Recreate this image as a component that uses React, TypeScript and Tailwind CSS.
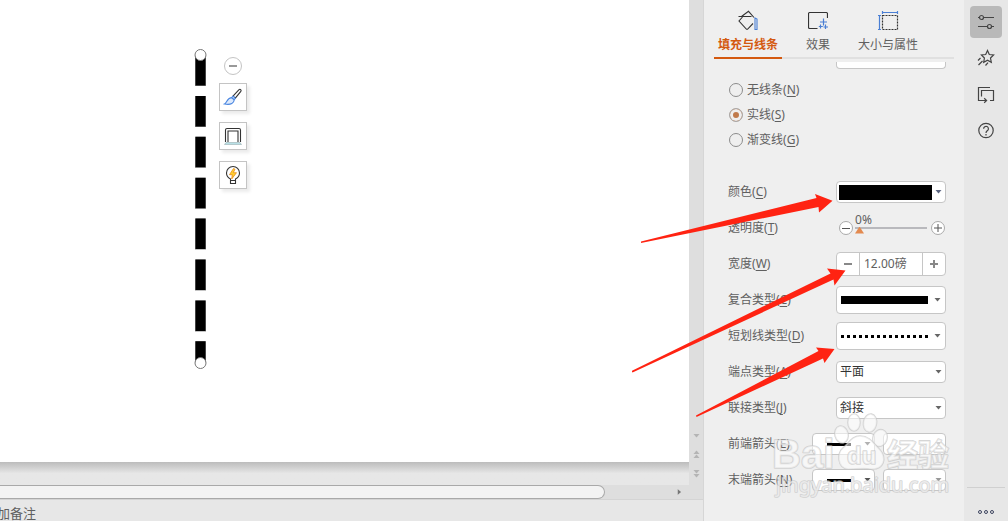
import { useState, type ReactNode } from "react";
import clsx from "clsx";

const lineKinds = [
  { id: "none", name: "无线条", hotkey: "N" },
  { id: "solid", name: "实线", hotkey: "S" },
  { id: "gradient", name: "渐变线", hotkey: "G" },
];

const boxStyle = "border border-[#c6c6c6] rounded bg-white";

function Label({ name, hotkey }: { name: string; hotkey: string }) {
  return (
    <>
      {name}(<span className="underline underline-offset-2">{hotkey}</span>)
    </>
  );
}

function Caret({ className }: { className?: string }) {
  return (
    <svg viewBox="0 0 7 4" className={clsx("w-[7px] h-1 shrink-0", className)} aria-hidden="true">
      <path d="M0.5 0h6L3.5 3.6z" fill="currentColor" />
    </svg>
  );
}

function Row({ id, name, hotkey, children }: { id: string; name: string; hotkey: string; children: ReactNode }) {
  return (
    <div className="flex items-center justify-between h-9">
      <label htmlFor={id} className="whitespace-nowrap">
        <Label name={name} hotkey={hotkey} />
      </label>
      {children}
    </div>
  );
}

function TextSelect({ id, options }: { id: string; options: string[] }) {
  return (
    <div className="relative w-[110px]">
      <select id={id} className={clsx(boxStyle, "appearance-none w-full h-[22px] pl-[3px] text-[#333] leading-5 outline-none")}>
        {options.map((o) => (
          <option key={o}>{o}</option>
        ))}
      </select>
      <Caret className="absolute right-1 top-[9px] text-[#666] pointer-events-none" />
    </div>
  );
}

/* Tab icons */
function FillIcon() {
  return (
    <svg viewBox="0 0 20 20" className="w-5 h-5" fill="none" stroke="#333" strokeWidth="1.1">
      <path d="M0.5 6.5h13M3.5 6.5L10.5 1.3 16 7.5M4.5 7L1 11l7.5 8.3h1L15 13.5" />
      <path d="M17 8l2 1v10.5h-2z" stroke="#4a7fd4" />
    </svg>
  );
}

function EffectIcon() {
  return (
    <svg viewBox="0 0 20 20" className="w-5 h-5" fill="none" stroke="#333" strokeWidth="1.2">
      <path d="M9.5 18.5h-8a1.5 1.5 0 0 1-1-1v-14a1.5 1.5 0 0 1 1-1h17a1.5 1.5 0 0 1 1 1V8" />
      <path d="M15.5 8.5v7M12 12h7M12.5 14.5v4M10.8 16.5h4M17.5 14.5v4.5M15.5 17h4.5" stroke="#4a7fd4" />
    </svg>
  );
}

function SizeIcon() {
  return (
    <svg viewBox="0 0 22 20" className="w-[22px] h-5" fill="none" stroke="#333" strokeWidth="1.2">
      <path d="M5.5 5.5h15v14h-15z" strokeDasharray="2 1" />
      <path d="M5 2.5h16M5.5 1v3M20.5 1v3M2.5 5v15M1 5.5h3M1 19.5h3" stroke="#4a7fd4" />
    </svg>
  );
}

const tabs = [
  { name: "填充与线条", icon: <FillIcon />, active: true },
  { name: "效果", icon: <EffectIcon />, active: false },
  { name: "大小与属性", icon: <SizeIcon />, active: false },
];

const railItems = [
  {
    name: "属性",
    active: true,
    icon: <path d="M6.5 5.5H17M1 14.5h9.5M14.5 14.5H17M1 5.5h1.5M6.5 5.5a2 2 0 1 1-4 0 2 2 0 0 1 4 0zM14.5 14.5a2 2 0 1 1-4 0 2 2 0 0 1 4 0z" />,
  },
  {
    name: "动画",
    active: false,
    icon: (
      <path d="M10.5 2.5l1.8 4 4.3.5-3.1 3 .8 4.3-3.8-2.1-3.8 2.1.7-4.3-3-3 4.3-.5zM1 12.5l2.5-2.5M1.5 17l4-4M8.5 17.5l2.5-2.8" />
    ),
  },
  {
    name: "切换",
    active: false,
    icon: <path d="M13 3.5H1.5v13h8M7.2 14.2l2.4 2.3-2.4 2.3M4.5 12.5v-6h12v10H13" />,
  },
  {
    name: "帮助",
    active: false,
    icon: (
      <>
        <circle cx="9" cy="10.5" r="7.2" />
        <path d="M6.6 8.7a2.4 2.4 0 1 1 3.9 1.9C9.4 11.4 9 11.8 9 12.9M9 14.1v1.3" />
      </>
    ),
  },
];

function BrushIcon() {
  return (
    <svg viewBox="0 0 20 20" className="w-5 h-5" fill="none" strokeWidth="1.1">
      <path d="M10 9.2l5.8-6.4c1.4-1.2 3 .1 2 1.6l-5.5 6.8z" stroke="#333" />
      <path d="M10 9.2l2.4 2-1.3 1.6-2.6-2.1z" fill="#cfe0fa" stroke="#4a86e0" />
      <path d="M8.4 10.6l2.7 2.2c.2 3-3 5.6-9.6 4.2 2.5-1 2.2-5.7 6.9-6.4z" fill="#dce9fc" stroke="#4a86e0" />
    </svg>
  );
}

function FrameIcon() {
  return (
    <svg viewBox="0 0 20 20" className="w-5 h-5" fill="none" stroke="#333" strokeWidth="1.1">
      <path d="M2.5 16V4q0-1.5 1.5-1.5h12q1.5 0 1.5 1.5v12M5 16V5h10v11" />
      <path d="M3 16.5h14l1.5 2h-17z" fill="#b8e0e6" stroke="#9aaeb2" strokeWidth=".6" />
    </svg>
  );
}

function BulbIcon() {
  return (
    <svg viewBox="0 0 20 20" className="w-5 h-5" fill="none" stroke="#333" strokeWidth="1.1">
      <path d="M7.5 15.5V14C5 12.7 3.5 10.6 3.5 8a6.5 6.5 0 0 1 13 0c0 2.6-1.5 4.7-4 6v1.5zM7.5 15.5v3h5v-3" />
      <path d="M10.5 3.5L6.5 9.7h2.8L8.7 14l4.8-6.3h-3.2l1.7-3.5z" fill="#ffd02e" stroke="#e88c1c" strokeWidth=".8" />
    </svg>
  );
}

const quickTools = [
  { name: "形状样式", icon: <BrushIcon /> },
  { name: "形状轮廓", icon: <FrameIcon /> },
  { name: "智能推荐", icon: <BulbIcon /> },
];

function Editor() {
  return (
    <main className="flex-1 min-w-0 flex flex-col bg-[#e7e7e7] border-r border-[#d6d6d6]">
      <div className="flex-1 flex">
        <div className="flex-1 flex flex-col">
          {/* Slide */}
          <div className="relative flex-1 bg-white">
            <svg className="absolute left-[190px] top-[45px] w-5 h-[328px]" viewBox="0 0 20 328" aria-label="虚线">
              <path d="M10.5 10v308" stroke="#888" strokeWidth="11" strokeDasharray="31 9.9" />
              <path d="M10.5 10v308" stroke="#000" strokeWidth="10" strokeDasharray="30.5 10.4" />
              <circle cx="10.5" cy="10" r="5.5" fill="#fff" stroke="#777" />
              <circle cx="10.5" cy="318" r="5.5" fill="#fff" stroke="#777" />
            </svg>
            <div className="absolute left-[219px] top-[57px] flex flex-col items-center">
              <button aria-label="收起" className="w-[18px] h-[18px] mb-2 rounded-full border border-[#c4c4c4] bg-white flex items-center justify-center">
                <span className="w-2 h-0.5 bg-[#999]" />
              </button>
              <div className="flex flex-col gap-[11px]">
                {quickTools.map((t) => (
                  <button
                    key={t.name}
                    aria-label={t.name}
                    className="w-7 h-7 border border-[#c4c4c4] bg-white shadow-[3px_3px_3px_#00000014] flex items-center justify-center"
                  >
                    {t.icon}
                  </button>
                ))}
              </div>
            </div>
          </div>
          <div className="h-[23px] bg-linear-to-b from-[#bcbcbc] to-[#e7e7e7] to-50%" />
        </div>
        {/* Vertical scroll bar with slide stepping */}
        <div className="w-3.5 bg-[#dedede] flex flex-col items-center justify-end gap-3 pb-[7px] text-[#b4b4b4]">
          <button aria-label="向下滚动" className="flex">
            <Caret />
          </button>
          <button aria-label="上一张" className="flex flex-col">
            <Caret className="rotate-180" />
            <Caret className="rotate-180" />
          </button>
          <button aria-label="下一张" className="flex flex-col">
            <Caret />
            <Caret />
          </button>
        </div>
      </div>
      <div className="h-[15px] bg-[#dedede] border-b border-[#d4d4d4] flex items-center justify-between">
        <div className="w-[86%] h-3.5 rounded-r-full border border-l-0 border-[#a9a9a9] bg-[#f3f3f3]" />
        <button aria-label="向右滚动" className="flex mr-5">
          <Caret className="-rotate-90 text-[#777]" />
        </button>
      </div>
      <textarea
        aria-label="备注"
        rows={1}
        defaultValue="加备注"
        className="h-[21px] w-full -ml-[3px] pt-[3px] text-[13px] leading-5 text-[#606060] resize-none overflow-hidden outline-none"
      />
    </main>
  );
}

function Panel() {
  const [kind, setKind] = useState("solid");
  const [opacity, setOpacity] = useState(0);

  return (
    <aside className="w-[260px] shrink-0 bg-[#efefef]">
      <div className="mx-2.5 border-b-2 border-[#e0e0e0]">
        <div role="tablist" className="flex gap-5 -mb-0.5 whitespace-nowrap">
          {tabs.map((t) => (
            <button
              key={t.name}
              role="tab"
              aria-selected={t.active}
              className={clsx(
                "flex flex-col items-center gap-[5px] pt-2.5 px-1 pb-0.5 border-b-2",
                t.active ? "border-[#d4590f] text-[#d4590f] font-bold" : "border-transparent"
              )}
            >
              {t.icon}
              <span className="leading-5">{t.name}</span>
            </button>
          ))}
        </div>
      </div>

      <div className="pt-[3px] pl-6 pr-[18px]">
        <div className="ml-auto w-[110px] h-[7px] border border-t-0 border-[#c6c6c6] rounded-b bg-white" />

        <fieldset className="pl-px mt-2 mb-[22px]">
          {lineKinds.map((k) => (
            <label key={k.id} className="flex items-center gap-1 h-[25px]">
              <input
                type="radio"
                name="line-kind"
                checked={kind === k.id}
                onChange={() => setKind(k.id)}
                className="appearance-none w-3.5 h-3.5 rounded-full border border-[#8c8c8c] checked:border-[#aaa] checked:bg-[#c07a4c] checked:shadow-[inset_0_0_0_3px_#efefef]"
              />
              <span>
                <Label name={k.name} hotkey={k.hotkey} />
              </span>
            </label>
          ))}
        </fieldset>

        <Row id="color" name="颜色" hotkey="C">
          <button id="color" aria-haspopup="listbox" className={clsx(boxStyle, "w-[110px] h-[22px] pl-0.5 pr-[3px] flex items-center justify-between")}>
            <span className="w-[93px] h-[15px] bg-black" />
            <Caret className="text-[#5b6480]" />
          </button>
        </Row>

        <Row id="opacity" name="透明度" hotkey="T">
          <div className="relative w-[110px] pl-[3px] pr-px flex items-center gap-0.5">
            <button
              aria-label="降低透明度"
              onClick={() => setOpacity(Math.max(0, opacity - 1))}
              className="w-3.5 h-3.5 shrink-0 rounded-full border border-[#aaa] bg-white flex items-center justify-center"
            >
              <span className="w-2 h-px bg-[#555]" />
            </button>
            <output htmlFor="opacity" className="absolute left-[19px] -top-[9px] leading-4">
              {opacity}%
            </output>
            <input
              id="opacity"
              type="range"
              value={opacity}
              onChange={(e) => setOpacity(Number(e.target.value))}
              className="appearance-none flex-1 min-w-0 mr-0.5 h-0.5 bg-[#b9b9bd] outline-none [&::-webkit-slider-thumb]:appearance-none [&::-webkit-slider-thumb]:w-[9px] [&::-webkit-slider-thumb]:h-[7px] [&::-webkit-slider-thumb]:mt-1 [&::-webkit-slider-thumb]:bg-[#e38a50] [&::-webkit-slider-thumb]:[clip-path:polygon(50%_0,100%_100%,0_100%)]"
            />
            <button
              aria-label="提高透明度"
              onClick={() => setOpacity(Math.min(100, opacity + 1))}
              className="w-3.5 h-3.5 shrink-0 rounded-full border border-[#aaa] bg-white flex items-center justify-center"
            >
              <svg viewBox="0 0 8 8" className="w-2 h-2" stroke="#555">
                <path d="M0 4h8M4 0v8" />
              </svg>
            </button>
          </div>
        </Row>

        <Row id="width" name="宽度" hotkey="W">
          <div className={clsx(boxStyle, "w-[110px] h-6 flex divide-x divide-[#c6c6c6]")}>
            <button aria-label="减小宽度" className="w-[23px] shrink-0 flex items-center justify-center">
              <span className="w-2 h-0.5 bg-[#888]" />
            </button>
            <input id="width" defaultValue="12.00磅" className="flex-1 min-w-0 pl-1 outline-none" />
            <button aria-label="增大宽度" className="w-[22px] shrink-0 flex items-center justify-center">
              <svg viewBox="0 0 8 8" className="w-2 h-2" stroke="#888" strokeWidth="2">
                <path d="M0 4h8M4 0v8" />
              </svg>
            </button>
          </div>
        </Row>

        <Row id="compound" name="复合类型" hotkey="C">
          <button id="compound" aria-haspopup="listbox" className={clsx(boxStyle, "w-[110px] h-7 px-1 flex items-center justify-between")}>
            <span className="w-[87px] h-2 bg-black" />
            <Caret className="text-[#666]" />
          </button>
        </Row>

        <Row id="dash" name="短划线类型" hotkey="D">
          <button id="dash" aria-haspopup="listbox" className={clsx(boxStyle, "w-[110px] h-7 px-1 flex items-center justify-between")}>
            <svg viewBox="0 0 87 3" className="w-[87px] h-[3px]">
              <path d="M0 1.5h87" stroke="#000" strokeWidth="3" strokeDasharray="3 3" />
            </svg>
            <Caret className="text-[#666]" />
          </button>
        </Row>

        <Row id="cap" name="端点类型" hotkey="A">
          <TextSelect id="cap" options={["平面", "圆形", "正方形"]} />
        </Row>
        <Row id="join" name="联接类型" hotkey="J">
          <TextSelect id="join" options={["斜接", "圆形", "棱台"]} />
        </Row>

        {[
          { id: "head", name: "前端箭头", hotkey: "E" },
          { id: "tail", name: "末端箭头", hotkey: "N" },
        ].map((a) => (
          <Row key={a.id} id={a.id} name={a.name} hotkey={a.hotkey}>
            <div className="flex gap-2">
              <button id={a.id} aria-haspopup="listbox" className={clsx(boxStyle, "w-[63px] h-[22px] pl-3.5 pr-[3px] flex items-center justify-between")}>
                <span className="w-6 h-[3px] bg-black" />
                <Caret className="text-[#555]" />
              </button>
              <button aria-label={a.name + "大小"} className={clsx(boxStyle, "w-[63px] h-[22px] pr-[3px] flex items-center justify-end")}>
                <Caret className="text-[#999]" />
              </button>
            </div>
          </Row>
        ))}
      </div>
    </aside>
  );
}

function Rail() {
  return (
    <nav className="w-11 shrink-0 bg-[#e7e7e7] flex flex-col items-center gap-1 pt-1.5">
      {railItems.map((r) => (
        <button
          key={r.name}
          aria-label={r.name}
          className={clsx("w-8 h-8 rounded flex items-center justify-center", r.active && "bg-[#b9b9b9]")}
        >
          <svg viewBox="0 0 18 20" className="w-[18px] h-5" fill="none" stroke="#444" strokeWidth="1.2">
            {r.icon}
          </svg>
        </button>
      ))}
      <div className="mt-auto w-[38px] h-[34px] border-t border-[#d0d0d0] flex justify-center pt-[22px]">
        <button aria-label="更多" className="flex gap-0.5 h-1">
          <span className="w-1 h-1 rounded-full border border-[#3d4560]" />
          <span className="w-1 h-1 rounded-full border border-[#3d4560]" />
          <span className="w-1 h-1 rounded-full border border-[#3d4560]" />
        </button>
      </div>
    </nav>
  );
}

// Red pointers and the site mark, laid over the right side of the window
function Annotations() {
  return (
    <svg className="absolute right-0 top-0 w-[376px] h-[521px] pointer-events-none" viewBox="632 0 376 521">
      <g fill="#fff" fillOpacity=".55" stroke="#c4c4c4" strokeOpacity=".7" strokeWidth="1.6" strokeLinejoin="round" paintOrder="stroke">
        <text x="772" y="468" fontSize="40" fontWeight="700" fontFamily="Liberation Sans, sans-serif">
          Bai
        </text>
        <ellipse cx="841.5" cy="434.5" rx="6.5" ry="8.5" transform="rotate(-15 841.5 434.5)" />
        <ellipse cx="854" cy="422.5" rx="6" ry="8.5" />
        <ellipse cx="870" cy="423" rx="6.5" ry="9" transform="rotate(10 870 423)" />
        <ellipse cx="880" cy="438" rx="7" ry="8.5" transform="rotate(20 880 438)" />
        <path d="M860 436c-8 0-11 7-17 12-6 5-6 20 5 21 8 0 16-1 23 0 13 1 16-11 9-19-6-6-10-14-20-14z" />
        <text x="847" y="464" fontSize="24" fontWeight="700" fontFamily="Liberation Sans, sans-serif">
          du
        </text>
        <text x="887" y="466" fontSize="31" fontWeight="700" fontFamily="Noto Sans CJK SC, sans-serif">
          经验
        </text>
        <text x="776" y="492" fontSize="20" fontFamily="Noto Sans, sans-serif">
          jingyan.baidu.com
        </text>
      </g>
      <g fill="#ff2312">
        <path d="M641 241.500L816.500 198l-1.500-4 17.500 6.700L819 212.500l-.5-5.500L641 243z" />
        <path d="M631.500 371L830.500 273.500l-3.500-5 18.500 2L834.500 285.500l-1-6L632.500 372.500z" />
        <path d="M696 415.500L818.500 351l-2.500-3.500 18.500 1.500-10 14-1.500-4.500L696.500 417z" />
      </g>
    </svg>
  );
}

export default function App() {
  return (
    <div className="relative min-h-screen flex text-xs text-[#606060] font-['Noto_Sans','Noto_Sans_CJK_SC',sans-serif]">
      <Editor />
      <Panel />
      <Rail />
      <Annotations />
    </div>
  );
}
